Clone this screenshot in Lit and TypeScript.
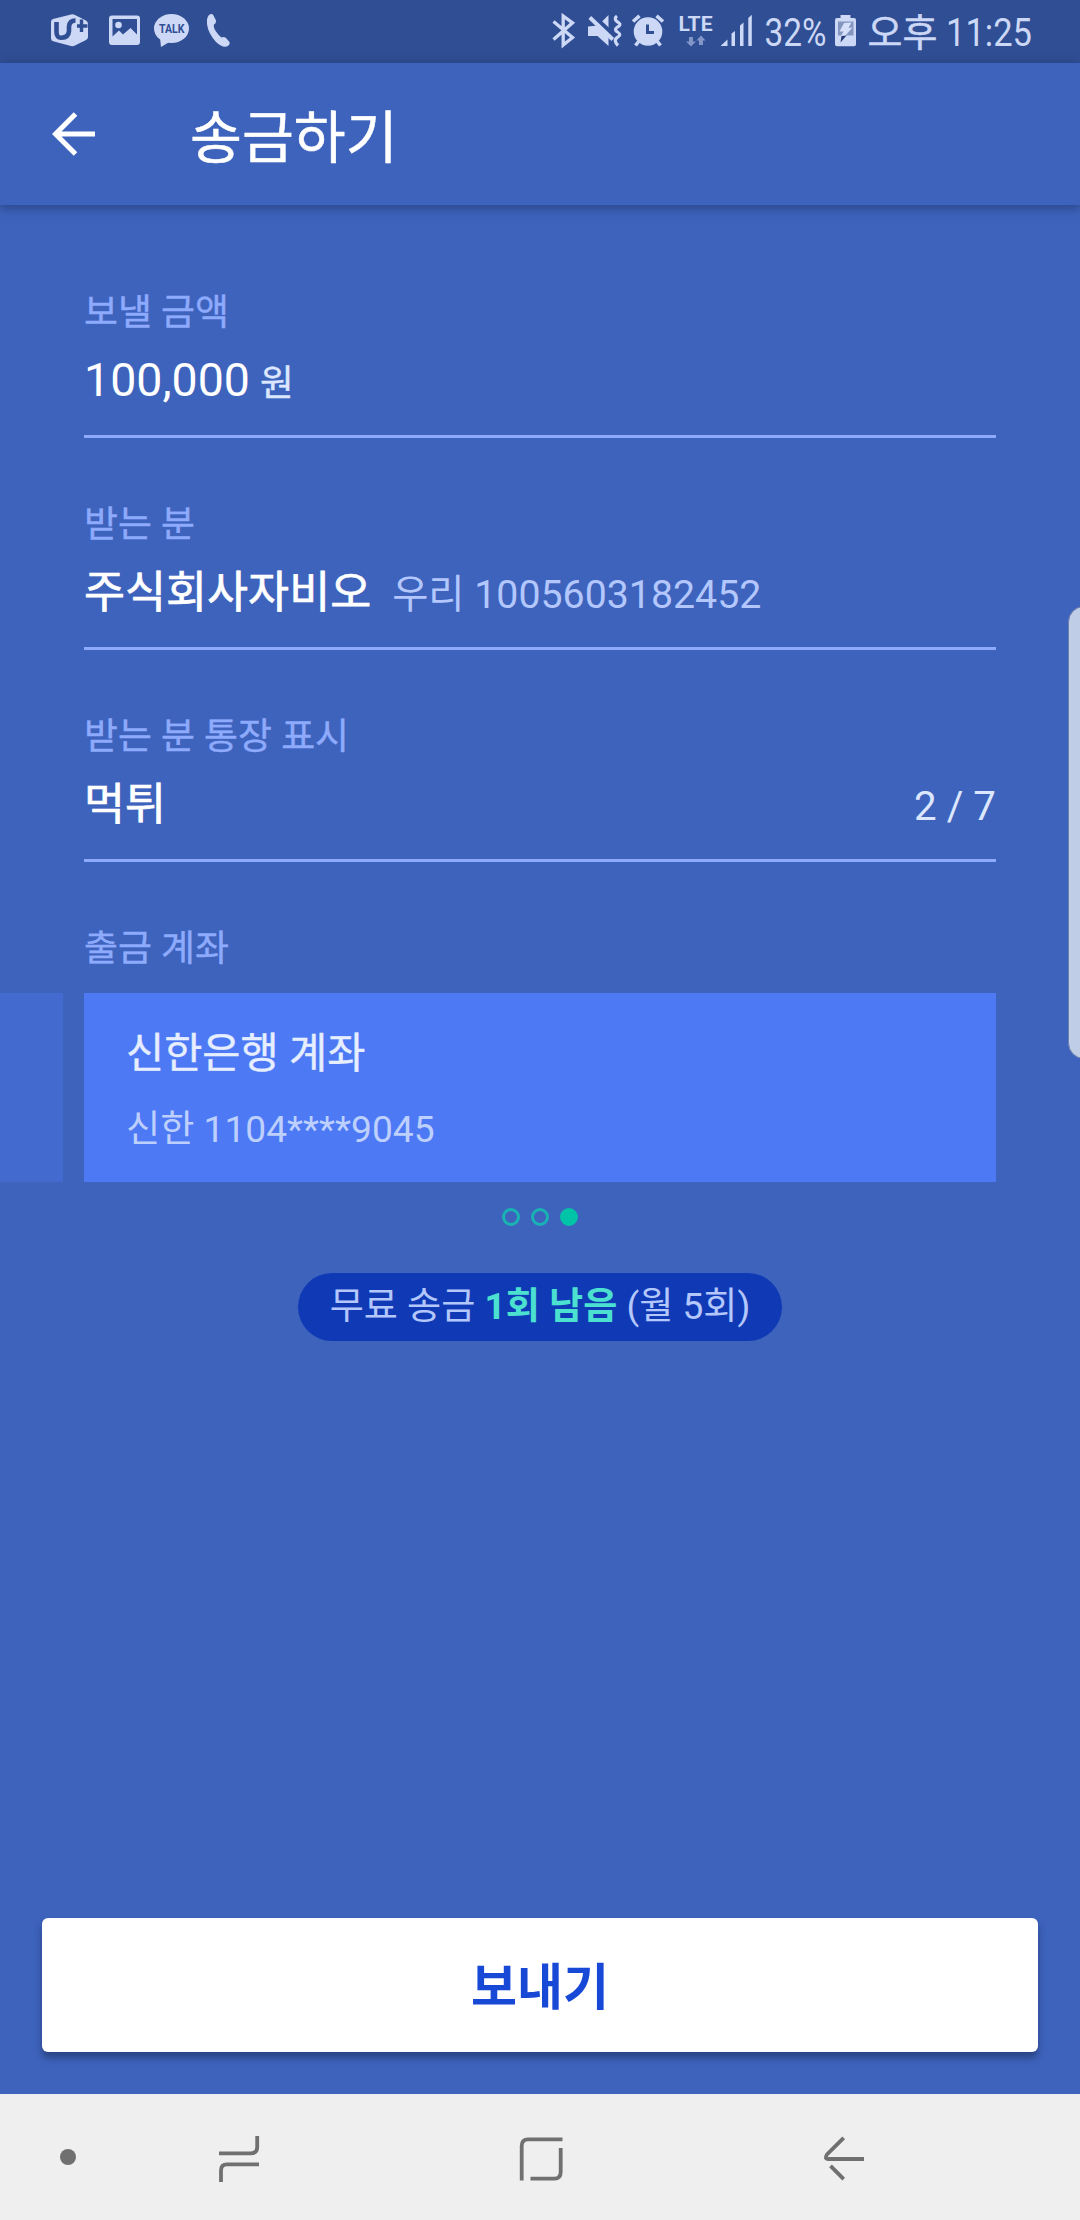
import { LitElement, html, css, svg } from "lit";
import { customElement, property } from "lit/decorators.js";

const FONT = css`Roboto, "Noto Sans CJK KR", sans-serif`;

@customElement("status-bar")
class StatusBar extends LitElement {
  static styles = css`
    :host {
      display: block;
      height: 63px;
      background: #304e94;
    }
    .bar {
      display: block;
      font-family: ${FONT};
    }
  `;

  render() {
    const c = "#ccd8f5";
    const bg = "#304e94";
    return html`
      <svg class="bar" width="1080" height="63" viewBox="0 0 1080 63" fill=${c}>
        ${svg`
        <!-- carrier -->
        <path d="M53 19 L71 14.500 Q73 14 75 15 L86 20.500 Q88 21.500 88 24 V37 Q88 39 86 40 L75 45.500 Q73 46.500 71 46 L54 41.500 Q51 41 51 38 V22 Q51 19.600 53 19Z"/>
        <path d="M56.500 22 V32 Q56.500 38 61.500 37.800 Q68.500 37.500 69 31 V26.500 Q69.500 20.500 75.500 20.500" fill="none" stroke=${bg} stroke-width="4.600"/>
        <path d="M81.500 19.500 V32 M77 26 H87.500" fill="none" stroke=${bg} stroke-width="3.400"/>
        <!-- gallery -->
        <path fill-rule="evenodd" d="M112 15.500 H137 Q140 15.500 140 18.500 V42 Q140 45 137 45 H112 Q109 45 109 42 V18.500 Q109 15.500 112 15.500Z M112.500 19 V36.500 L119 30.500 L123 34.500 L130.500 28 L137 34.500 V19Z"/>
        <circle cx="118.500" cy="25" r="3.300"/>
        <!-- messenger -->
        <ellipse cx="171.500" cy="28.500" rx="17.500" ry="14.500"/>
        <path d="M160 38 L161 47 L171 41Z"/>
        <!-- call -->
        <path d="M209 15 Q212 13 213.500 15.500 L216 20.500 Q216.500 23 214 24.500 Q213 27 216 31.500 Q219 36 221.500 37.500 Q224 36.500 226 38 L229.500 42 Q230.500 44 228 46 Q223 48.500 216 42 Q208 33 207 24 Q206.500 17.500 209 15Z"/>
        <!-- bluetooth -->
        <path d="M553.500 21.500 L572.500 37.500 L563.200 45 V16 L572.500 22.800 L553.500 39.500" fill="none" stroke=${c} stroke-width="3.300"/>
        <!-- muted, vibrating -->
        <path d="M588 26.500 L598 25.500 L608.500 15 V46 L597.500 36 H588Z"/>
        <path d="M592 14.500 L616 37.500" stroke=${bg} stroke-width="4.500"/>
        <path d="M589.800 17.500 L612.800 39.500" stroke=${c} stroke-width="4"/>
        <path d="M617 16 Q613.500 18.500 617 21.500 L619 23 Q621.500 25 617.500 27 Q613.500 29.500 617.500 32 Q621.500 34.500 618.500 36.500 L616.500 38 Q613.500 41 618 45.500" fill="none" stroke=${c} stroke-width="3.200"/>
        <!-- alarm -->
        <circle cx="648" cy="31.500" r="14.300"/>
        <path d="M633 21.500 L639.500 15.800 M656.500 15.800 L663 21.500 M639 41 L635.500 45.500 M657 41 L660.500 45.500" stroke=${c} stroke-width="3.600"/>
        <path d="M647.500 24.500 V32.500 H654" fill="none" stroke=${bg} stroke-width="3"/>
        <!-- data arrows -->
        <path fill="#8296c8" d="M689 37 h4 v4.500 h3 L691 46.500 L686 41.500 h3Z M699 45 h4 v-4.500 h2.500 L701 35.500 L696.500 40.500 h2.500Z"/>
        <!-- signal -->
        <path d="M720.500 46 L727.500 39.500 V46Z M731.500 46 V33.500 L735 31 V46Z M740 46 V25.500 L743.500 22.500 V46Z M748.300 46 V18 L751.800 14.800 V46Z"/>
        <!-- battery -->
        <path d="M840.500 15 H850.500 V18 H854 Q856 18 856 20 V44.500 Q856 46.300 854 46.300 H837 Q835 46.300 835 44.500 V20 Q835 18 837 18 H840.500Z"/>
        <rect x="838" y="21.500" width="15.500" height="14" fill="#8495c0"/>
        <path d="M844 23 L851.500 22.500 L848.500 28 L852.500 27.500 L845 36 L840.500 37 L843.500 31.500 L839.500 31.500Z" fill="#d6e0f8"/>
        <path d="M841.500 36 L846.500 35.500 L840.500 42.500Z" fill="#233c78"/>
        <text x="159" y="33" font-size="12" font-weight="700" fill=${bg} textLength="25.500" lengthAdjust="spacingAndGlyphs">TALK</text>
        <text x="678.500" y="31" font-size="20.500" font-weight="700" textLength="34" lengthAdjust="spacingAndGlyphs">LTE</text>
        <text x="764.500" y="46" font-size="39" textLength="62" lengthAdjust="spacingAndGlyphs">32%</text>
        <text x="867.500" y="46" font-size="38" stroke=${c} stroke-width="0.500">오후</text>
        <text x="946" y="46" font-size="39" textLength="86" lengthAdjust="spacingAndGlyphs">11:25</text>
        `}
      </svg>
    `;
  }
}

@customElement("form-field")
class FormField extends LitElement {
  @property() label = "";

  static styles = css`
    :host {
      display: block;
      box-sizing: border-box;
      height: 212px;
      margin: 0 84px;
      padding-top: 62px;
      border-bottom: 3px solid #8eaafc;
    }
    .label {
      font-size: 36.9px;
      line-height: 50px;
      color: #8eaafc;
      -webkit-text-stroke: 0.4px #8eaafc;
    }
    .row {
      display: flex;
      justify-content: space-between;
      margin-top: 12px;
      font-size: 46.5px;
      line-height: 60px;
      color: #fff;
    }
  `;

  render() {
    return html`
      <div class="label">${this.label}</div>
      <div class="row"><slot></slot></div>
    `;
  }
}

@customElement("app-root")
class AppRoot extends LitElement {
  static styles = css`
    :host {
      display: block;
      font-family: ${FONT};
    }
    .screen {
      position: relative;
      display: flex;
      flex-direction: column;
      width: 1080px;
      height: 2220px;
      overflow: hidden;
      background: #3e63bc;
    }
    .toolbar {
      flex: none;
      display: flex;
      align-items: center;
      height: 142px;
      box-shadow: 0 3px 10px rgba(20, 40, 80, 0.5);
    }
    .back {
      margin-left: 52px;
    }
    .title {
      margin-left: 94px;
      padding-top: 9px;
      font-size: 56.4px;
      line-height: 60px;
      color: #fff;
      -webkit-text-stroke: 0.5px #fff;
    }
    .form {
      padding-top: 21px;
    }
    .small {
      margin-left: 1px;
      font-size: 36.75px;
      line-height: 1;
      color: #dce7ff;
      -webkit-text-stroke: 0.4px #dce7ff;
    }
    .name {
      font-size: 44.6px;
      line-height: 1;
      font-weight: 400;
      -webkit-text-stroke: 0.7px #fff;
    }
    .account {
      margin-left: 21px;
      font-size: 39.3px;
      line-height: 1;
      color: #b3c7fc;
    }
    .count {
      font-size: 40.3px;
      line-height: 1;
      color: #dce7ff;
    }
    .source {
      margin: 62px 84px 0;
      font-size: 36.9px;
      line-height: 50px;
      color: #8eaafc;
      -webkit-text-stroke: 0.4px #8eaafc;
    }
    .cards {
      display: flex;
      gap: 21px;
      height: 189px;
      margin-top: 19px;
    }
    .peek {
      width: 63px;
      background: #426acf;
    }
    .card {
      box-sizing: border-box;
      width: 912px;
      padding: 36px 42px 0;
      background: #4d79f5;
    }
    .card-title {
      font-size: 41.5px;
      line-height: 50px;
      color: #e6eeff;
      -webkit-text-stroke: 0.4px #e6eeff;
    }
    .card-sub {
      margin-top: 26px;
      font-size: 37.15px;
      line-height: 50px;
      color: #bdd0fd;
    }
    .dots {
      display: flex;
      justify-content: center;
      gap: 11px;
      margin-top: 26px;
    }
    .dot {
      box-sizing: border-box;
      width: 18px;
      height: 18px;
      border: 3px solid #18b3b2;
      border-radius: 50%;
    }
    .dot.on {
      background: #00c4a7;
      border-color: #00c4a7;
    }
    .pill {
      align-self: center;
      width: 484px;
      height: 68px;
      margin-top: 47px;
      border-radius: 34px;
      background: #103ab5;
      text-align: center;
      font-size: 37.1px;
      line-height: 68px;
      white-space: nowrap;
      color: #b3c7fc;
    }
    .left {
      font-weight: 700;
      color: #4ce0d0;
    }
    .send {
      box-sizing: border-box;
      flex: none;
      height: 134px;
      margin: auto 42px 42px;
      padding: 0 0 5px;
      border: 0;
      border-radius: 6px;
      background: #fff;
      box-shadow: 0 6px 7px rgba(20, 40, 80, 0.5);
      font-family: inherit;
      font-size: 50px;
      font-weight: 700;
      color: #1849d6;
    }
    .nav {
      display: block;
      flex: none;
      background: #efefef;
    }
    .edge {
      position: absolute;
      right: -24px;
      top: 606px;
      box-sizing: border-box;
      width: 36px;
      height: 453px;
      border: 1px solid #6f81ae;
      border-radius: 16px;
      background: #c0cde6;
    }
  `;

  render() {
    return html`
      <div class="screen">
        <status-bar></status-bar>
        <div class="toolbar">
          <svg class="back" width="44" height="44" viewBox="0 0 44 44" fill="none" stroke="#fff" stroke-width="5">
            <path d="M23.500 2 L3.500 22 L23.500 42 M3.500 22 H43" />
          </svg>
          <div class="title">송금하기</div>
        </div>
        <div class="form">
          <form-field label="보낼 금액">
            <div>100,000<span class="small"> 원</span></div>
          </form-field>
          <form-field label="받는 분">
            <div><span class="name">주식회사자비오</span><span class="account">우리 1005603182452</span></div>
          </form-field>
          <form-field label="받는 분 통장 표시">
            <div><span class="name">먹튀</span></div>
            <div><span class="count">2 / 7</span></div>
          </form-field>
        </div>
        <div class="source">출금 계좌</div>
        <div class="cards">
          <div class="peek"></div>
          <div class="card">
            <div class="card-title">신한은행 계좌</div>
            <div class="card-sub">신한 1104****9045</div>
          </div>
        </div>
        <div class="dots">
          <div class="dot"></div>
          <div class="dot"></div>
          <div class="dot on"></div>
        </div>
        <div class="pill">무료 송금 <span class="left">1회 남음</span> (월 5회)</div>
        <button class="send">보내기</button>
        <svg class="nav" width="1080" height="126" viewBox="0 0 1080 126" fill="none" stroke="#707070" stroke-width="3.800">
          <circle cx="68" cy="63" r="8" fill="#707070" stroke="none" />
          <path d="M219 59.300 H251 Q257.200 59.300 257.200 53 V42 M259 70.300 H227 Q221 70.300 221 76.500 V88" />
          <path d="M521.700 86.500 V52 Q521.700 45.300 528 45.300 H562.500 M560.700 54 V78 Q560.700 84.600 554.500 84.600 H530.500" />
          <path d="M843.700 43.800 L827 60.500 Q824 65 828.500 65 H864 M830.500 71.800 L843.700 85.200" />
        </svg>
        <div class="edge"></div>
      </div>
    `;
  }
}
